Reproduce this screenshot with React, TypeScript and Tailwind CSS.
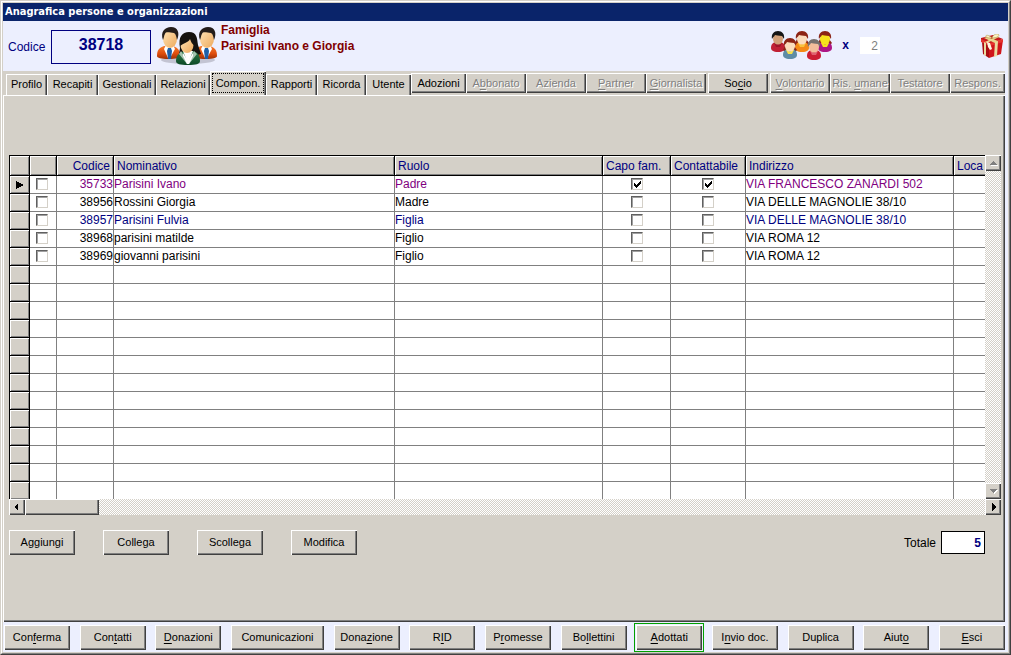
import { ReactNode } from 'react';

const font = 'font-["Liberation_Sans",Arial,sans-serif]';

const raised =
  'bg-[#d4d0c8] shadow-[inset_1px_1px_0_#fff,inset_-1px_-1px_0_#404040,inset_-2px_-2px_0_#808080]';

const dither =
  'bg-[repeating-conic-gradient(#d4d0c8_0_25%,#ffffff_0_50%)] bg-[length:2px_2px]';

const tabs = [
  { label: 'Profilo', width: 'w-[41px]' },
  { label: 'Recapiti', width: 'w-[51px]' },
  { label: 'Gestionali', width: 'w-[58px]' },
  { label: 'Relazioni', width: 'w-[54px]' },
  { label: 'Compon.', width: 'w-[56px]', active: true },
  { label: 'Rapporti', width: 'w-[51px]' },
  { label: 'Ricorda', width: 'w-[49px]' },
  { label: 'Utente', width: 'w-[45px]' },
];

// "&" marks the access key, as in the menu resources
const roleButtons = [
  { label: 'Adozioni', enabled: true, className: 'w-[55px]' },
  { label: 'A&bbonato', enabled: false, className: 'w-[60px]' },
  { label: 'Azienda', enabled: false, className: 'w-[60px]' },
  { label: '&Partner', enabled: false, className: 'w-[60px]' },
  { label: '&Giornalista', enabled: false, className: 'w-[60px]' },
  { label: 'So&cio', enabled: true, className: 'w-[60px] mx-0.5' },
  { label: '&Volontario', enabled: false, className: 'w-[60px]' },
  { label: 'Ris. &umane', enabled: false, className: 'w-[60px]' },
  { label: 'Testatore', enabled: false, className: 'w-[60px]' },
  { label: 'Respons.', enabled: false, className: 'w-[55px]' },
];

const members = [
  { code: 35733, name: 'Parisini Ivano', role: 'Padre', head: true, contact: true, address: 'VIA FRANCESCO ZANARDI 502', color: 'text-[#800080]' },
  { code: 38956, name: 'Rossini Giorgia', role: 'Madre', head: false, contact: false, address: 'VIA DELLE MAGNOLIE 38/10', color: 'text-black' },
  { code: 38957, name: 'Parisini Fulvia', role: 'Figlia', head: false, contact: false, address: 'VIA DELLE MAGNOLIE 38/10', color: 'text-[#000080]' },
  { code: 38968, name: 'parisini matilde', role: 'Figlio', head: false, contact: false, address: 'VIA ROMA 12', color: 'text-black' },
  { code: 38969, name: 'giovanni parisini', role: 'Figlio', head: false, contact: false, address: 'VIA ROMA 12', color: 'text-black' },
];

const emptyRows = Array.from({ length: 13 }, (_, i) => i);

const gridActions = ['Aggiungi', 'Collega', 'Scollega', 'Modifica'];

const footerButtons = [
  { label: 'Con&ferma', width: 'w-[66px]' },
  { label: 'Con&tatti', width: 'w-[66px]' },
  { label: '&Donazioni', width: 'w-[66px]' },
  { label: 'Comunicazioni', width: 'w-[93px]' },
  { label: 'Dona&zione', width: 'w-[66px]' },
  { label: 'R&ID', width: 'w-[66px]' },
  { label: 'P&romesse', width: 'w-[66px]' },
  { label: 'Bo&llettini', width: 'w-[66px]' },
  { label: '&Adottati', width: 'w-[66px]', focused: true },
  { label: 'I&nvio doc.', width: 'w-[66px]' },
  { label: 'Duplica', width: 'w-[66px]' },
  { label: 'Aiut&o', width: 'w-[66px]' },
  { label: '&Esci', width: 'w-[66px]' },
];

function KeyLabel({ text }: { text: string }) {
  const at = text.indexOf('&');
  if (at < 0) return <span>{text}</span>;
  return (
    <span className="whitespace-pre">
      {text.slice(0, at)}
      <u className="underline-offset-2">{text[at + 1]}</u>
      {text.slice(at + 2)}
    </span>
  );
}

function Check({ label, checked = false }: { label: string; checked?: boolean }) {
  return (
    <span className="grid h-3 w-3">
      <input
        type="checkbox"
        aria-label={label}
        defaultChecked={checked}
        className="peer col-start-1 row-start-1 h-3 w-3 appearance-none border border-t-[#606060] border-l-[#606060] border-r-[#d4d0c8] border-b-[#d4d0c8] bg-white shadow-[inset_1px_1px_0_#a0a0a0]"
      />
      <svg viewBox="0 0 12 12" shapeRendering="crispEdges" className="pointer-events-none invisible col-start-1 row-start-1 h-3 w-3 peer-checked:visible">
        <path d="M3 5h1v3h-1zM4 6h1v3h-1zM5 7h1v3h-1zM6 6h1v3h-1zM7 5h1v3h-1zM8 4h1v3h-1zM9 3h1v3h-1z" fill="#000" />
      </svg>
    </span>
  );
}

function Arrow({ points, label, disabled, className = '' }: { points: string; label: string; disabled?: boolean; className?: string }) {
  return (
    <button aria-label={label} disabled={disabled} className={`${raised} ${className} flex h-4 w-4 shrink-0 items-center justify-center`}>
      <svg viewBox="0 0 10 10" className="h-2.5 w-2.5" shapeRendering="crispEdges">
        {disabled && <polygon points={points} fill="#fff" transform="translate(1 1)" />}
        <polygon points={points} fill={disabled ? '#808080' : '#000'} />
      </svg>
    </button>
  );
}

function Man() {
  return (
    <g>
      <path d="M0 29c0-6 2-8 7-10h9c5 2 7 4 7 10 0 2-4 3-11.500 3S0 31 0 29z" fill="url(#suit)" />
      <path d="M9 18h7l2 4-5 9h-2l-4-9z" fill="#fff" />
      <path d="M11 21h3l1 3-1 8h-3l-1-8z" fill="#1d5fa8" />
      <ellipse cx="13" cy="12" rx="7" ry="9" fill="url(#skin)" />
      <path d="M6 13C3 5 8 0 14 0c7 0 9 6 6 13-1-4-1-6-3-7-4 0-8-2-9 1-1 1-1 4-2 6z" fill="#241d1a" />
    </g>
  );
}

function FamilyIcon() {
  return (
    <svg viewBox="0 0 60 39" className="h-[39px] w-[60px]" aria-hidden="true">
      <defs>
        <linearGradient id="suit" x1="0" y1="0" x2="0" y2="1">
          <stop offset="0" stopColor="#f47b2c" />
          <stop offset=".6" stopColor="#dd4b0b" />
          <stop offset="1" stopColor="#9d3206" />
        </linearGradient>
        <linearGradient id="skin" x1="0" y1="0" x2="1" y2="1">
          <stop offset="0" stopColor="#ffe3b5" />
          <stop offset="1" stopColor="#eda95c" />
        </linearGradient>
        <linearGradient id="jacket" x1="0" y1="0" x2="0" y2="1">
          <stop offset="0" stopColor="#2f7a4a" />
          <stop offset="1" stopColor="#0d4a26" />
        </linearGradient>
      </defs>
      <ellipse cx="31" cy="33" rx="27" ry="4" fill="#9a9aa8" opacity=".5" />
      <g transform="translate(0 0)"><Man /></g>
      <g transform="translate(37 0)"><Man /></g>
      <path d="M23 21C21 10 25 5 32 5c8 0 8 6 9 13l3 9-7 2-10-1-5-1z" fill="#15120f" />
      <path d="M19 34c0-6 3-8 8-10h9c5 2 7 4 7 10 0 3-4 4-12 4s-12-1-12-4z" fill="url(#jacket)" />
      <path d="M26 24h10l-5 13z" fill="#fff" />
      <path d="M24 24l7 11 6-11 3 3-8 10h-2l-8-10z" fill="#a3c3ae" />
      <path d="M26 26l5 8 5-8v3l-4 8h-2l-4-8z" fill="#fff" />
      <ellipse cx="30" cy="18" rx="6.500" ry="8" fill="url(#skin)" />
      <path d="M23 19c0-8 3-10 8-10 5 0 7 4 7 10-3-2-4-4-5-7-1 3-6 4-10 7z" fill="#15120f" />
    </svg>
  );
}

const kids = [
  { x: 0, y: 0, hair: '#151515', face: '#d2a078', body: '#c02035', trim: '#a01428' },
  { x: 24, y: 0, hair: '#8c2415', face: '#fbdcbc', body: '#f58a16', trim: '#f9c23c', braids: true },
  { x: 47, y: 0, hair: '#8c2415', face: '#f7e21c', body: '#ad1685', trim: '#f7e21c', braids: true },
  { x: 12, y: 7, hair: '#8c2415', face: '#fbdcbc', body: '#5f8ca5', trim: '#f6e04a', braids: true },
  { x: 36, y: 8, hair: '#77706d', face: '#f3bd9b', body: '#cb1d33', trim: '#e06070' },
];

function KidsIcon() {
  return (
    <svg viewBox="0 0 62 29" className="h-[29px] w-[62px]" aria-hidden="true">
      {kids.map(({ x, y, hair, face, body, trim, braids }) => (
        <g key={x} transform={`translate(${x} ${y})`}>
          {braids && <path d="M2 8l-2 4 2 2 3-3zM11 8l3 4-2 2-3-3z" fill={hair} />}
          <path d="M0 17c0-4 2-5 4-6h6c2 1 4 2 4 6 0 2-2 4-7 4s-7-2-7-4z" fill={body} />
          <path d="M3 12l2-1 2 3 2-3 2 1-2 4H5z" fill={trim} />
          <ellipse cx="7" cy="8" rx="5" ry="5.500" fill={face} />
          <path d="M1 8C0 3 3 0 7 0s7 3 6 8l-2-3C8 5 5 4 4 4 3 6 2 6 1 8z" fill={hair} />
        </g>
      ))}
    </svg>
  );
}

function GiftIcon() {
  return (
    <svg viewBox="0 0 24 24" className="h-6 w-6" aria-hidden="true">
      <path d="M2 8l7 3v13l-6-4z" fill="#a80d12" />
      <path d="M9 10l14-4-2 14-12 4z" fill="#d0161b" />
      <path d="M1 4l12-3 10 4-13 5-9-3z" fill="#c4181c" />
      <path d="M1 5l9 4 13-4v3l-13 4-9-4z" fill="#e5342f" />
      <path d="M4 8l2 1v13l-2-1zM15 8l3-1-1 15-3 1z" fill="#eadba0" />
      <path d="M4 4l3-1 11 4-3 2zM17 2l2 1-12 6-2-1z" fill="#e8d690" />
      <path d="M12 4C8 0 5 1 6 3c1 1 4 1 6 1 1-4 6-5 7-3 0 2-4 3-7 3z" fill="#fbf2c4" stroke="#a58432" strokeWidth=".5" />
      <path d="M7 8l3 1 2 6-2 1-2-3z" fill="#fff6e4" />
    </svg>
  );
}

function HeadCell({ children, className = '' }: { children?: ReactNode; className?: string }) {
  return (
    <th className={`h-[21px] border-y border-r border-black bg-[#d4d0c8] px-[3px] py-0 text-left font-normal whitespace-nowrap shadow-[inset_1px_1px_0_#fff,inset_-1px_-1px_0_#808080] ${className}`}>
      {children}
    </th>
  );
}

const cell = 'h-[18px] border-r border-b border-[#808080] p-0 pb-px whitespace-nowrap';
const selector = 'h-[18px] border-x border-b border-black bg-[#d4d0c8] p-0 shadow-[inset_1px_1px_0_#fff,inset_-1px_-1px_0_#808080]';

function MembersGrid() {
  return (
    <div className="flex">
      <div className="min-w-0 flex-1">
        <div className="h-[344px] overflow-hidden bg-white">
          <table className="w-[1144px] min-w-full table-fixed border-separate border-spacing-0 text-xs leading-4">
            <colgroup>
              <col className="w-[21px]" />
              <col className="w-[27px]" />
              <col className="w-[57px]" />
              <col className="w-[281px]" />
              <col className="w-[208px]" />
              <col className="w-[68px]" />
              <col className="w-[75px]" />
              <col className="w-[208px]" />
              <col className="w-[199px]" />
            </colgroup>
            <thead className="text-[#000080]">
              <tr>
                <HeadCell className="border-l" />
                <HeadCell />
                <HeadCell className="text-right">Codice</HeadCell>
                <HeadCell>Nominativo</HeadCell>
                <HeadCell>Ruolo</HeadCell>
                <HeadCell>Capo fam.</HeadCell>
                <HeadCell>Contattabile</HeadCell>
                <HeadCell>Indirizzo</HeadCell>
                <HeadCell>Loca</HeadCell>
              </tr>
            </thead>
            <tbody>
              {members.map((m, i) => (
                <tr key={m.code} className={m.color}>
                  <td className={selector}>
                    {i === 0 && (
                      <svg viewBox="0 0 8 8" className="mx-auto h-2 w-2" shapeRendering="crispEdges">
                        <polygon points="0,0 8,4 0,8" fill="#000" />
                      </svg>
                    )}
                  </td>
                  <td className={cell}>
                    <div className="flex pl-1.5"><Check label={`Seleziona ${m.name}`} /></div>
                  </td>
                  <td className={`${cell} text-right`}>{m.code}</td>
                  <td className={cell}>{m.name}</td>
                  <td className={cell}>{m.role}</td>
                  <td className={cell}>
                    <div className="flex justify-center"><Check label={`Capo fam. ${m.name}`} checked={m.head} /></div>
                  </td>
                  <td className={cell}>
                    <div className="flex justify-center"><Check label={`Contattabile ${m.name}`} checked={m.contact} /></div>
                  </td>
                  <td className={cell}>{m.address}</td>
                  <td className={cell} />
                </tr>
              ))}
              {emptyRows.map((row) => (
                <tr key={row}>
                  <td className={selector} />
                  <td className={cell} />
                  <td className={cell} />
                  <td className={cell} />
                  <td className={cell} />
                  <td className={cell} />
                  <td className={cell} />
                  <td className={cell} />
                  <td className={cell} />
                </tr>
              ))}
            </tbody>
          </table>
        </div>
        <div className={`flex h-4 ${dither}`}>
          <Arrow label="Scorri a sinistra" points="6,1 6,9 2,5" />
          <div className={`${raised} w-[74px]`} />
        </div>
      </div>
      <div className={`flex w-4 flex-col ${dither}`}>
        <Arrow label="Scorri su" points="1,7 9,7 5,3" disabled />
        <Arrow label="Scorri giù" points="1,3 9,3 5,7" disabled className="mt-auto" />
        <Arrow label="Scorri a destra" points="4,1 4,9 8,5" />
      </div>
    </div>
  );
}

function Header() {
  return (
    <header className="flex h-[50px] items-start bg-[#eceffe] pr-1 pl-[5px]">
      <label htmlFor="codice" className="w-[43px] pt-[18px] text-xs leading-4 text-[#000080]">Codice</label>
      <input
        id="codice"
        defaultValue="38718"
        className="mt-[9px] h-[34px] w-[100px] border border-[#000080] bg-[#eceffe] pb-1 text-center text-base font-bold text-[#000080]"
      />
      <div className="mt-1.5 ml-1.5"><FamilyIcon /></div>
      <div className="mt-[1px] ml-1 text-xs leading-4 font-bold text-[#800000]">
        <p>Famiglia</p>
        <p>Parisini Ivano e Giorgia</p>
      </div>
      <div className="ml-auto flex items-start">
        <div className="mt-2.5"><KidsIcon /></div>
        <label htmlFor="figli" className="mt-4 ml-[9px] text-xs leading-4 font-bold text-[#000080]">x</label>
        <input id="figli" defaultValue="2" disabled className="mt-4 ml-[11px] h-[17px] w-5 bg-white pr-0.5 text-right text-xs text-[#808080]" />
        <div className="mt-[13px] ml-[100px]"><GiftIcon /></div>
      </div>
    </header>
  );
}

function TabStrip() {
  return (
    <nav className="flex h-6 items-end bg-[#d4d0c8] pl-[3px]">
      <div role="tablist" className="flex items-end">
        {tabs.map(({ label, width, active }) => (
          <button
            key={label}
            role="tab"
            aria-selected={!!active}
            className={`${width} shrink-0 bg-[#d4d0c8] text-[11px] whitespace-nowrap shadow-[inset_1px_1px_0_#fff,inset_-1px_0_0_#404040,inset_-2px_0_0_#808080] ${active ? 'h-6 p-0.5' : 'h-[21px]'}`}
          >
            {active ? <span className="block border border-dotted border-black leading-[18px]">{label}</span> : label}
          </button>
        ))}
      </div>
      <div className="mb-0.5 flex">
        {roleButtons.map(({ label, enabled, className }) => (
          <button
            key={label}
            disabled={!enabled}
            className={`${raised} ${className} h-5 shrink-0 text-[11px] leading-4 whitespace-nowrap ${enabled ? '' : 'text-[#808080] [text-shadow:1px_1px_0_#fff]'}`}
          >
            <KeyLabel text={label} />
          </button>
        ))}
      </div>
    </nav>
  );
}

export default function App() {
  return (
    <div className={`${font} min-h-screen border border-t-[#d4d0c8] border-l-[#d4d0c8] border-r-[#404040] border-b-[#404040] bg-[#d4d0c8] text-black`}>
      <div className="flex min-h-[calc(100vh-2px)] flex-col border border-t-white border-l-white border-r-[#808080] border-b-[#808080] p-px">
        <h1 className="h-[18px] bg-[#0a246a] pl-0.5 font-['DejaVu_Sans_Condensed','DejaVu_Sans',sans-serif] text-[11px] leading-[18px] font-bold text-white">
          Anagrafica persone e organizzazioni
        </h1>
        <Header />
        <div className="flex flex-1 flex-col bg-[#eceffe] pr-[3px]">
          <TabStrip />
          <main className="flex-1 bg-[#d4d0c8] pt-[60px] pr-1 pl-1.5 shadow-[inset_1px_1px_0_#fff,inset_-1px_-1px_0_#404040,inset_-2px_-2px_0_#808080]">
            <MembersGrid />
            <div className="mt-[15px] flex items-center pr-4">
              <div className="flex gap-7">
                {gridActions.map((label) => (
                  <button key={label} className={`${raised} h-[25px] w-[66px] text-[11px]`}>{label}</button>
                ))}
              </div>
              <label htmlFor="totale" className="ml-auto text-xs">Totale</label>
              <input id="totale" readOnly value="5" className="ml-[5px] h-[23px] w-11 border border-black bg-white pr-[3px] text-right text-xs font-bold text-[#000080]" />
            </div>
          </main>
        </div>
        <footer className="flex h-[30px] items-center justify-between bg-[#eceffe] pr-[3px] pl-px">
          {footerButtons.map(({ label, width, focused }) => (
            <button
              key={label}
              className={`${raised} ${width} h-[25px] text-[11px] whitespace-nowrap ${focused ? 'outline-1 outline-offset-1 outline-[#00a000]' : ''}`}
            >
              <KeyLabel text={label} />
            </button>
          ))}
        </footer>
      </div>
    </div>
  );
}
